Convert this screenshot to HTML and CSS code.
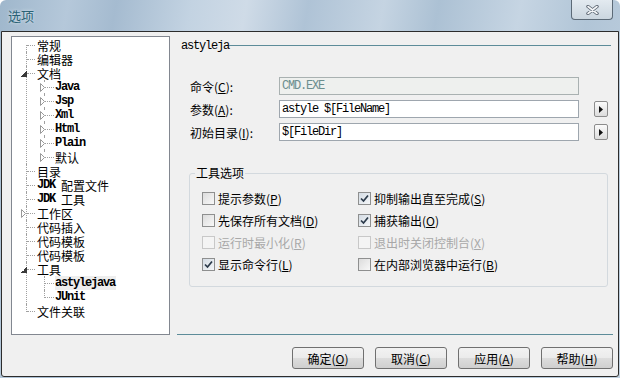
FILE: index.html
```html
<!DOCTYPE html>
<html lang="zh-CN">
<head>
  <meta charset="UTF-8">
  <title>选项</title>
  <link rel="stylesheet" href="styles.css">
</head>
<body>

<div class="window">
  <div class="titlebar">
    <span class="title">选项</span>
    <button class="close-btn">
      <svg width="13" height="10" viewBox="0 0 13 10"><path d="M2 1.5 L11 8.5 M11 1.5 L2 8.5" stroke="#5a6470" stroke-width="3.4" stroke-linecap="round"/><path d="M2 1.5 L11 8.5 M11 1.5 L2 8.5" stroke="#f4f6f8" stroke-width="1.6" stroke-linecap="round"/></svg>
    </button>
  </div>

  <div class="client">
    <div class="main">
      <ul class="tree">
        <li class="node"><div class="row">常规</div></li>
        <li class="node"><div class="row">编辑器</div></li>
        <li class="node">
          <div class="row"><i class="exp open"></i>文档</div>
          <ul class="sub">
            <li class="leaf"><div class="row"><i class="exp shut"></i><span class="mono">Java</span></div></li>
            <li class="leaf"><div class="row"><i class="exp shut"></i><span class="mono">Jsp</span></div></li>
            <li class="leaf"><div class="row"><i class="exp shut"></i><span class="mono">Xml</span></div></li>
            <li class="leaf"><div class="row"><i class="exp shut"></i><span class="mono">Html</span></div></li>
            <li class="leaf"><div class="row"><i class="exp shut"></i><span class="mono">Plain</span></div></li>
            <li class="leaf"><div class="row"><i class="exp shut"></i>默认</div></li>
          </ul>
        </li>
        <li class="node"><div class="row">目录</div></li>
        <li class="node"><div class="row"><span class="mono">JDK&nbsp;</span>配置文件</div></li>
        <li class="node"><div class="row"><span class="mono">JDK&nbsp;</span>工具</div></li>
        <li class="node"><div class="row"><i class="exp shut"></i>工作区</div></li>
        <li class="node"><div class="row">代码插入</div></li>
        <li class="node"><div class="row">代码模板</div></li>
        <li class="node"><div class="row">代码模板</div></li>
        <li class="node">
          <div class="row"><i class="exp open"></i>工具</div>
          <ul class="sub">
            <li class="leaf"><div class="row"><span class="mono sel">astylejava</span></div></li>
            <li class="leaf"><div class="row"><span class="mono">JUnit</span></div></li>
          </ul>
        </li>
        <li class="node"><div class="row">文件关联</div></li>
      </ul>

      <div class="panel">
        <div class="panel-head"><span class="mono">astyleja</span><div class="rule"></div></div>

        <div class="form">
          <div class="form-row">
            <label>命令(<u>C</u>):</label>
            <input class="mono" type="text" value="CMD.EXE" disabled>
          </div>
          <div class="form-row">
            <label>参数(<u>A</u>):</label>
            <input class="mono" type="text" value="astyle $[FileName]">
            <button class="arrow-btn"><svg width="4" height="7" viewBox="0 0 4 7"><path d="M0 0 L4 3.5 L0 7 Z" fill="#111"/></svg></button>
          </div>
          <div class="form-row">
            <label>初始目录(<u>I</u>):</label>
            <input class="mono" type="text" value="$[FileDir]">
            <button class="arrow-btn"><svg width="4" height="7" viewBox="0 0 4 7"><path d="M0 0 L4 3.5 L0 7 Z" fill="#111"/></svg></button>
          </div>
        </div>

        <fieldset class="group">
          <legend>工具选项</legend>
          <div class="opts">
            <div class="opt"><span class="cb"></span>提示参数(<u>P</u>)</div>
            <div class="opt"><span class="cb on"><svg width="9" height="9" viewBox="0 0 9 9"><path d="M1 4.5 L3.5 7 L8 1.5" fill="none" stroke="#2b3a4a" stroke-width="1.7"/></svg></span>抑制输出直至完成(<u>S</u>)</div>
            <div class="opt"><span class="cb"></span>先保存所有文档(<u>D</u>)</div>
            <div class="opt"><span class="cb on"><svg width="9" height="9" viewBox="0 0 9 9"><path d="M1 4.5 L3.5 7 L8 1.5" fill="none" stroke="#2b3a4a" stroke-width="1.7"/></svg></span>捕获输出(<u>O</u>)</div>
            <div class="opt off"><span class="cb"></span>运行时最小化(<u>R</u>)</div>
            <div class="opt off"><span class="cb"></span>退出时关闭控制台(<u>X</u>)</div>
            <div class="opt"><span class="cb on"><svg width="9" height="9" viewBox="0 0 9 9"><path d="M1 4.5 L3.5 7 L8 1.5" fill="none" stroke="#2b3a4a" stroke-width="1.7"/></svg></span>显示命令行(<u>L</u>)</div>
            <div class="opt"><span class="cb"></span>在内部浏览器中运行(<u>B</u>)</div>
          </div>
        </fieldset>
      </div>
    </div>

    <div class="footer">
      <button class="btn">确定(<u>O</u>)</button>
      <button class="btn">取消(<u>C</u>)</button>
      <button class="btn">应用(<u>A</u>)</button>
      <button class="btn">帮助(<u>H</u>)</button>
    </div>
  </div>
</div>

</body>
</html>
```

FILE: styles.css
```css
body { margin: 0; width: 620px; height: 378px; overflow: hidden; font-family: "Noto Sans CJK SC", sans-serif; font-size: 12px; color: #000; background: #fff; }
ul { list-style: none; margin: 0; padding: 0; }
u { text-decoration: underline; text-underline-offset: 1px; }

.mono { font-family: "Liberation Mono", "Noto Sans CJK SC", monospace; font-size: 12px; letter-spacing: -1.2px; font-weight: bold; }

.window { height: 378px; display: flex; flex-direction: column; border-radius: 6px 6px 0 0;
  background: linear-gradient(100deg, #9fb7cc 0%, #b5c8da 10%, #a5bbd0 17%, #c3d3e2 28%, #cfdbe7 36%, #afc3d6 45%, #c5d4e2 56%, #acc1d4 64%, #c6d5e3 76%, #b1c5d7 86%, #c0d0df 100%); }

.titlebar { height: 31px; display: flex; justify-content: space-between; align-items: flex-start; }
.title { margin: 7px 0 0 8px; font-size: 13px; line-height: 17px; color: #2a6275; text-shadow: 0 0 3px #e6eef4; }
.close-btn { width: 42px; height: 20px; margin-right: 7px; padding: 0; border: 1px solid #5c6a77; border-top: none; border-radius: 0 0 4px 4px;
  background: linear-gradient(#e3eaf0, #cbd6df); display: flex; align-items: center; justify-content: center; }

.client { flex: 1; margin: 0 1px 1px 1px; border: 1px solid #2c2c2c; border-radius: 0 0 3px 3px; background: #f0f0f0; padding: 4px 5px 0 9px; }
.main { height: 299px; display: flex; }

.tree { width: 159px; box-sizing: border-box; border: 1px solid #828790; background: #fff; padding-top: 1px; }
.tree li { position: relative; white-space: nowrap; }
.row { height: 14px; display: flex; align-items: center; }
.node { padding-left: 25px; }
.node::before { content: ""; position: absolute; left: 15px; top: 7px; width: 8px; border-top: 1px dotted #a0a0a0; }
.node::after { content: ""; position: absolute; left: 14px; top: 0; bottom: 0; border-left: 1px dotted #a0a0a0; }
.node:first-child::after { top: 7px; }
.node:last-child::after { bottom: auto; height: 8px; }
.sub { margin-left: -25px; }
.leaf { padding-left: 43px; }
.leaf::before { content: ""; position: absolute; left: 33px; top: 7px; width: 9px; border-top: 1px dotted #a0a0a0; }
.leaf::after { content: ""; position: absolute; left: 32px; top: 0; bottom: 0; border-left: 1px dotted #a0a0a0; }
.leaf:last-child::after { bottom: auto; height: 8px; }
.sel { background: #eeeeee; padding-right: 1px; }

.exp { position: absolute; z-index: 1; top: 4px; width: 6px; height: 6px; }
.node > .row > .exp { left: 9px; }
.leaf > .row > .exp { left: 28px; }
.exp.open { top: 5px; background: linear-gradient(135deg, transparent 50%, #3a3a3a 50%); }
.exp.shut { top: 3px; width: 5px; height: 9px; background: #fff;
  background-image: url("data:image/svg+xml,%3Csvg xmlns='http://www.w3.org/2000/svg' width='5' height='9'%3E%3Cpath d='M0.5 0.5 L4.5 4.5 L0.5 8.5 Z' fill='%23fff' stroke='%23999'/%3E%3C/svg%3E"); }

.panel { flex: 1; margin-left: 7px; border-bottom: 1px solid #5d8c99; box-sizing: border-box; }
.panel-head { height: 20px; display: flex; align-items: center; padding-left: 4px; margin-right: 2px; }
.panel-head .mono { font-weight: normal; }
.panel-head .rule { flex: 1; border-top: 1px solid #5d8c99; margin-top: -1px; }

.form { margin-top: 21px; padding-left: 13px; }
.form-row { display: flex; align-items: center; height: 18px; margin-bottom: 5px; }
.form-row label { width: 89px; }
.form-row input { width: 300px; height: 18px; box-sizing: border-box; border: 1px solid #9ea6ae; padding: 0 0 0 2px; background: #fff; color: #000; outline: none; font-weight: normal; }
.form-row input:disabled { background: #eef0ee; color: #6c8e8e; border-color: #a9b1b1; }
.arrow-btn { width: 14px; height: 16px; margin-left: 15px; padding: 0; border: 1px solid #8c8c8c; border-radius: 2px;
  background: linear-gradient(#fbfbfb, #dcdcdc); display: flex; align-items: center; justify-content: center; }

.group { width: 419px; box-sizing: border-box; margin: 25px 0 0 12px; padding: 7px 12px 11px 12px; border: 1px solid #d3d9de; border-radius: 3px; min-width: 0; }
.group legend { padding: 0 1px; margin-left: -7px; line-height: 14px; }
.opts { display: grid; grid-template-columns: 156px 1fr; grid-auto-rows: 22px; }
.opt { display: flex; align-items: center; white-space: nowrap; }
.cb { width: 13px; height: 13px; box-sizing: border-box; margin-right: 3px; border: 1px solid #8e8f8f;
  background: linear-gradient(135deg, #dcdcdc, #f8f8f8); display: flex; align-items: center; justify-content: center; }
.cb.on { background: linear-gradient(135deg, #d4dce4, #f4f6f8); }
.opt.off { color: #a8a8a8; }
.opt.off .cb { border-color: #c8c8c8; background: #f4f4f4; }

.footer { display: flex; justify-content: flex-end; gap: 11px; padding-top: 12px; }
.btn { width: 72px; height: 22px; padding: 0; border: 1px solid #707070; border-radius: 3px; font-family: "Noto Sans CJK SC", sans-serif; font-size: 12px; color: #000;
  background: linear-gradient(#f2f2f2 0%, #ebebeb 50%, #dddddd 51%, #cfcfcf 100%); }
```
